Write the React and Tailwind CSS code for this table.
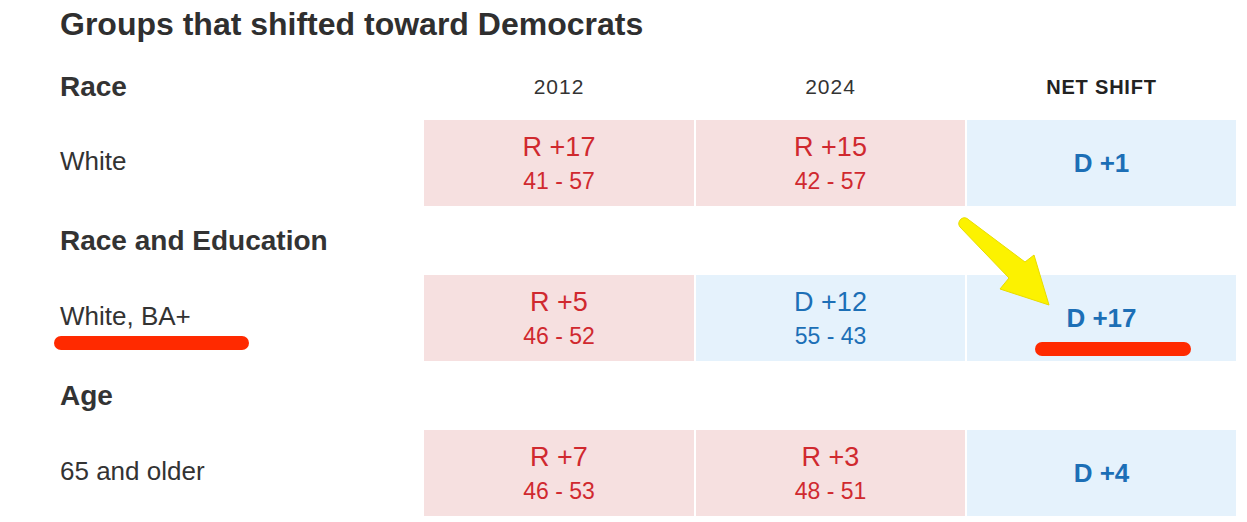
const font = { fontFamily: '"Liberation Sans", Arial, sans-serif' };

const rows = [
  {
    group: "Race",
    label: "White",
    a: { party: "R", text: "R +17", sub: "41 - 57" },
    b: { party: "R", text: "R +15", sub: "42 - 57" },
    net: "D +1",
  },
  {
    group: "Race and Education",
    label: "White, BA+",
    a: { party: "R", text: "R +5", sub: "46 - 52" },
    b: { party: "D", text: "D +12", sub: "55 - 43" },
    net: "D +17",
  },
  {
    group: "Age",
    label: "65 and older",
    a: { party: "R", text: "R +7", sub: "46 - 53" },
    b: { party: "R", text: "R +3", sub: "48 - 51" },
    net: "D +4",
  },
];

function Cell({ party, text, sub }) {
  const rep = party === "R";
  return (
    <div
      className={`h-[86px] flex flex-col items-center justify-center ${
        rep ? "bg-[#f6e0e0] text-[#d0292f]" : "bg-[#e5f2fc] text-[#1c6fb6]"
      }`}
    >
      <div className="text-[27px] leading-[32px]">{text}</div>
      <div className="text-[23px] leading-[30px] mt-[3px]">{sub}</div>
    </div>
  );
}

export default function App() {
  return (
    <div className="relative w-[1247px] h-[522px] bg-white text-[#333] overflow-hidden" style={font}>
      <div className="pl-[60px] pt-[4px]">
        <h1 className="text-[32px] leading-[40px] font-bold mb-[9px] text-[#2f2f2f]">
          Groups that shifted toward Democrats
        </h1>

        <div className="grid grid-cols-[362px_270px_269px_269px] gap-x-[2px]">
          {rows.map((r, i) => (
            <div key={r.label} className="contents">
              {/* group heading row */}
              {i === 0 ? (
                <>
                  <div className="h-[67px] flex items-center text-[28px] font-bold">{r.group}</div>
                  <div className="h-[67px] flex items-center justify-center text-[21px] tracking-[1px]">2012</div>
                  <div className="h-[67px] flex items-center justify-center text-[21px] tracking-[1px]">2024</div>
                  <div className="h-[67px] flex items-center justify-center text-[20px] font-bold tracking-[0.8px] text-[#222]">
                    NET SHIFT
                  </div>
                </>
              ) : (
                <div className="col-span-4 h-[69px] flex items-center text-[28px] font-bold">{r.group}</div>
              )}

              {/* data row */}
              <div className="h-[86px] flex items-center text-[26px] pb-[3px]">{r.label}</div>
              <Cell {...r.a} />
              <Cell {...r.b} />
              <div className="h-[86px] flex items-center justify-center bg-[#e5f2fc] text-[#1c6fb6] text-[26px] font-bold">
                {r.net}
              </div>
            </div>
          ))}
        </div>
      </div>

      {/* annotations */}
      <div className="absolute left-[54px] top-[336px] w-[195px] h-[14px] rounded-full bg-[#ff2a00]" />
      <div className="absolute left-[1035px] top-[342px] w-[156px] h-[14px] rounded-full bg-[#ff2a00]" />
      <svg className="absolute inset-0 pointer-events-none" width="1247" height="522">
        <path
          d="M961,219 Q965,216 969,220 L1025,262 L1034,255 L1049,305 L1000,289 L1009,278 L960,227 Q957,223 961,219 Z"
          fill="#fcf200"
          stroke="#e8dc00"
          strokeWidth="1"
          strokeLinejoin="round"
        />
      </svg>
    </div>
  );
}
